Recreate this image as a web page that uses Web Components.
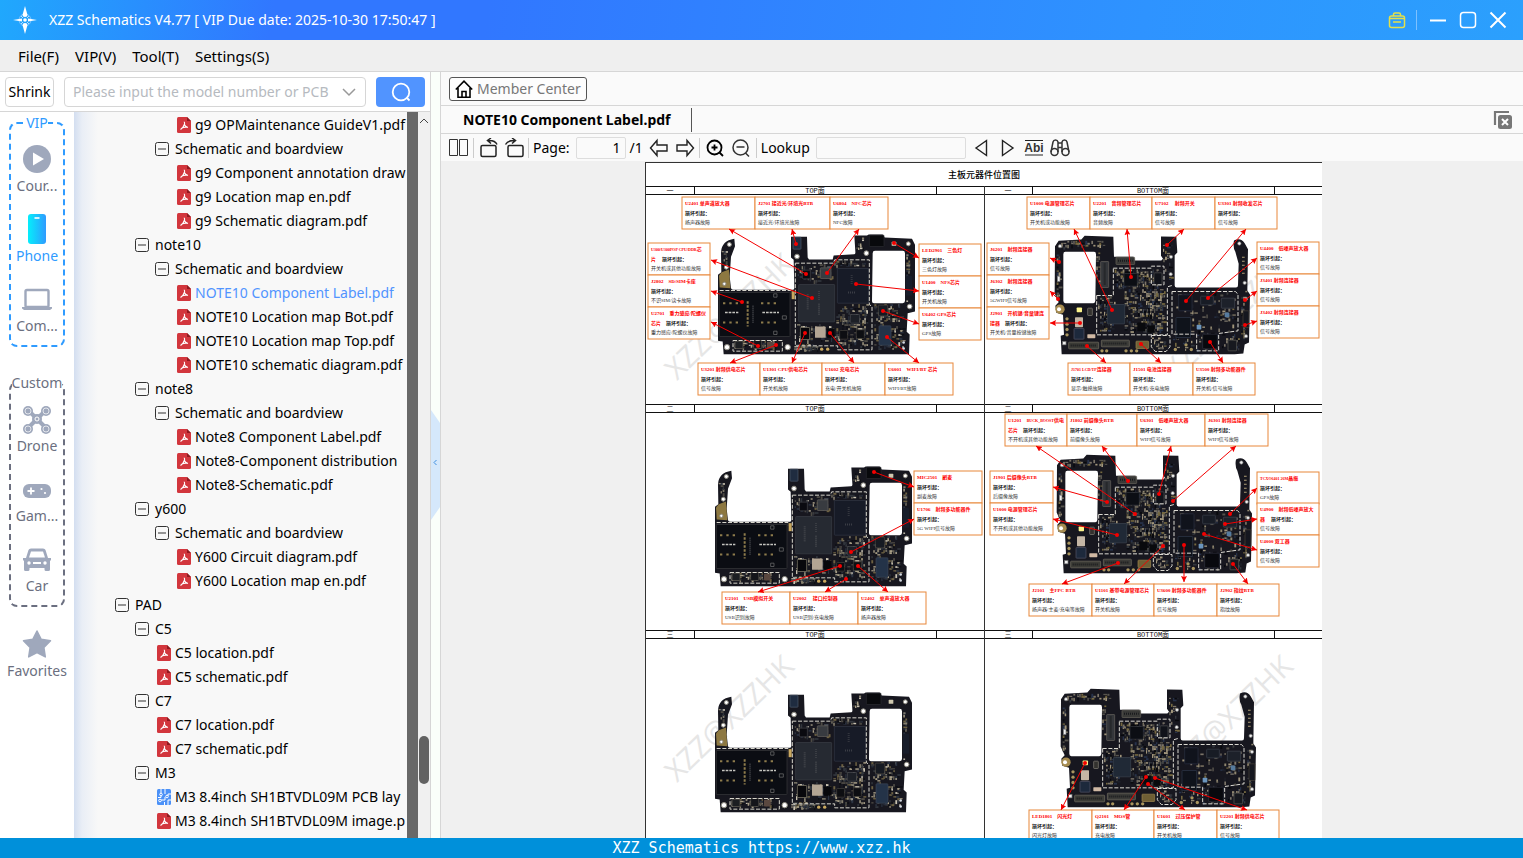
<!DOCTYPE html>
<html lang="en">
<head>
<meta charset="utf-8">
<title>XZZ Schematics</title>
<style>
    :root {
        --line: #d6d6d6;
        --accent: #5194ff;
        --rail: #6b6f80;
        --ui: "Noto Sans", "Open Sans", sans-serif;
    }

    body {
        margin: 0;
        font-family: var(--ui);
        font-size: 14px;
        line-height: 20px;
        color: #000;
    }
</style>
</head>
<body>
<schematic-app></schematic-app>

<script>
const icons = {
    logo: `<svg viewBox="0 0 24 28"><circle cx="12" cy="14" r="6" fill="none" stroke="#7cc4ff" stroke-width="1"/>
        <path d="M12 0l2.500 9q0 2-2.500 2t-2.500-2zM12 28l2.500-9q0-2-2.500-2t-2.500 2zM0 14l9-1.500v3zM24 14l-9-1.500v3z" fill="#fff"/>
        <path d="M8 10l2 2M16 10l-2 2M8 18l2-2M16 18l-2-2" stroke="#b9e0ff"/><circle cx="12" cy="14" r="1.800" fill="#fff"/></svg>`,
    bag: `<svg viewBox="0 0 18 18" fill="none" stroke="#e3e04a" stroke-width="1.500"><rect x="1.500" y="5" width="15" height="11.500" rx="2"/><path d="M5.500 5V3.500q0-1.500 1.500-1.500h4q1.500 0 1.500 1.500V5M1.500 7.500h15M5 11h8"/></svg>`,
    min: `<svg viewBox="0 0 18 18"><path d="M1 9.500h16" stroke="#fff" stroke-width="2"/></svg>`,
    max: `<svg viewBox="0 0 18 18"><rect x="1.500" y="1.500" width="15" height="15" rx="3" fill="none" stroke="#fff" stroke-width="1.500"/></svg>`,
    close: `<svg viewBox="0 0 18 18"><path d="M1.500 1.500l15 15M16.500 1.500l-15 15" stroke="#fff" stroke-width="2"/></svg>`,
    chevron: `<svg viewBox="0 0 14 10"><path d="M1 2l6 6 6-6" fill="none" stroke="#999" stroke-width="1.500"/></svg>`,
    search: `<svg viewBox="0 0 20 20" fill="none" stroke="#fff" stroke-width="1.800"><circle cx="10" cy="10" r="8.300"/><path d="M15.500 15.500l3 3"/></svg>`,
    home: `<svg viewBox="0 0 18 18" fill="none" stroke="#000" stroke-width="1.600"><path d="M.8 9.500L9 1.200l8.200 8.300M3 8v9.200h12V8M7 17v-5.500h4V17"/></svg>`,
    closeAll: `<svg viewBox="0 0 20 20"><path d="M2 15V2h14" fill="none" stroke="#777" stroke-width="2.200"/><rect x="5" y="5" width="14" height="14" rx="2.500" fill="#777"/><path d="M9 9l6 6M15 9l-6 6" stroke="#fff" stroke-width="2"/></svg>`,
    book: `<svg viewBox="0 0 20 20" fill="none" stroke="#333"><path d="M.5 1.500h8v16h-8zM10.500 1.500h8v16h-8z"/></svg>`,
    rotL: `<svg viewBox="0 0 20 20" fill="none" stroke="#222" stroke-width="1.500"><rect x="3" y="7.500" width="15" height="11" rx="1.500"/><path d="M19 6.500Q17 2 10 2.500M13 0L9.500 2.500 13 5.500"/></svg>`,
    rotR: `<svg viewBox="0 0 20 20" fill="none" stroke="#222" stroke-width="1.500"><rect x="4" y="7.500" width="15" height="11" rx="1.500"/><path d="M1.500 6.500Q4 2 11 2.500M8 0L11.500 2.500 8 5.500"/></svg>`,
    left: `<svg viewBox="0 0 20 20" fill="none" stroke="#222" stroke-width="1.400"><path d="M1.500 10L8 2.500V7h10v6H8v4.500z"/></svg>`,
    right: `<svg viewBox="0 0 20 20" fill="none" stroke="#222" stroke-width="1.400"><path d="M18.500 10L12 2.500V7H2v6h10v4.500z"/></svg>`,
    zoomIn: `<svg viewBox="0 0 20 20" fill="none" stroke="#000" stroke-width="1.800"><circle cx="9.500" cy="9.500" r="7"/><path d="M14.500 14.500l3.500 3.500M6.500 9.500h6M9.500 6.500v6"/></svg>`,
    zoomOut: `<svg viewBox="0 0 20 20" fill="none" stroke="#333" stroke-width="1.500"><circle cx="9.500" cy="9.500" r="7.500"/><path d="M14.500 15l3.500 3.500M5.500 9h8"/></svg>`,
    prev: `<svg viewBox="0 0 20 20" fill="none" stroke="#222" stroke-width="1.400"><path d="M14.500 2.500v15L4 10z"/></svg>`,
    next: `<svg viewBox="0 0 20 20" fill="none" stroke="#222" stroke-width="1.400"><path d="M4.500 2.500v15L15 10z"/></svg>`,
    abi: `<svg viewBox="0 0 20 20"><path d="M1 2.500h18M1 17h18" stroke="#222" stroke-width="1.200"/><text x="10" y="14" text-anchor="middle" font-family="Liberation Sans, sans-serif" font-weight="700" font-size="12" fill="#333">Abi</text></svg>`,
    find: `<svg viewBox="0 0 20 20" fill="none" stroke="#333" stroke-width="1.500"><circle cx="4.500" cy="14" r="3.500"/><circle cx="15.500" cy="14" r="3.500"/><path d="M1 14L3 4q.5-2 2.500-2T8 4v10M19 14L17 4q-.5-2-2.500-2T12 4v10M8 5h4M8 9.500h4"/></svg>`,
    pdf: `<svg viewBox="0 0 14 16"><path d="M1.500 0H10l4 4v10.500q0 1.500-1.500 1.500h-11Q0 16 0 14.500v-13Q0 0 1.500 0z" fill="#d2363d"/><path d="M10 0l4 4h-4z" fill="#8f1a20"/><path d="M6.800 5q1.200 0 .6 2.500Q8 9.500 11 10.500M3.500 12.500Q6.500 10.500 7.300 7.500M4.500 11.300Q7 9.800 10.500 10.300" fill="none" stroke="#fff" stroke-width="1.100"/></svg>`,
    pcb: `<svg viewBox="0 0 14 16"><rect width="14" height="16" rx="1.500" fill="#4b91f7"/><path d="M4 0v4M4 7v1.500H1M8 0v5M8 8v3H4M7.500 16v-3M11 16v-5h3M11 7V5h3" fill="none" stroke="#fff"/><g fill="#4b91f7" stroke="#fff"><circle cx="4" cy="5.500" r="1.300"/><circle cx="10" cy="7.500" r="1.300"/><circle cx="3" cy="11.500" r="1.300"/></g></svg>`,
    minus: `<svg viewBox="0 0 14 14" fill="none" stroke="#333"><rect x=".5" y=".5" width="13" height="13" rx="2"/><path d="M3 7h8"/></svg>`,
    play: `<svg viewBox="0 0 30 30"><circle cx="15" cy="15" r="14" fill="#9fa8bc"/><path d="M11 8.500v13l11-6.500z" fill="#fff"/></svg>`,
    phone: `<svg viewBox="0 0 30 30"><defs><linearGradient id="g"><stop offset="0" stop-color="#05eefb"/><stop offset="1" stop-color="#2f9bff"/></linearGradient></defs><rect x="6" width="18" height="30" rx="3" fill="url(#g)"/><path d="M12.500 4h5" stroke="#fff" stroke-width="1.600"/></svg>`,
    laptop: `<svg viewBox="0 0 30 30"><rect x="3.500" y="6" width="23" height="17" rx="1.500" fill="none" stroke="#9fa8bc" stroke-width="2.400"/><path d="M0 23h30v1.500l-2 1.500H2l-2-1.500z" fill="#9fa8bc"/></svg>`,
    drone: `<svg viewBox="0 0 30 30" fill="none" stroke="#9fa8bc"><path d="M6 6l18 18M24 6L6 24" stroke-width="4"/><circle cx="15" cy="15" r="5" fill="#9fa8bc" stroke="none"/><circle cx="15" cy="15" r="2" stroke="#fff"/><g fill="#9fa8bc" stroke="none"><circle cx="6" cy="7" r="5"/><circle cx="24" cy="7" r="5"/><circle cx="6" cy="25" r="5"/><circle cx="24" cy="25" r="5"/></g><g stroke="#fff" stroke-width=".7"><circle cx="6" cy="7" r="3"/><circle cx="24" cy="7" r="3"/><circle cx="6" cy="25" r="3"/><circle cx="24" cy="25" r="3"/></g></svg>`,
    game: `<svg viewBox="0 0 30 30"><rect x="1" y="10" width="28" height="14" rx="6" fill="#9fa8bc"/><path d="M9 13.500v7M5.500 17h7" stroke="#fff" stroke-width="1.800"/><circle cx="19.500" cy="15" r="1.100" fill="#fff"/><circle cx="23" cy="19" r="1.100" fill="#fff"/></svg>`,
    car: `<svg viewBox="0 0 30 30"><path d="M4 14L6.500 6Q7 4.500 9 4.500h12q2 0 2.500 1.500L26 14h3v2l-1 1v8.500q0 1.500-1.500 1.500h-2.500q-1.500 0-1.500-1.500V24h-15v1.500Q7.500 27 6 27H3.500Q2 27 2 25.500V17l-1-1v-2z" fill="#9fa8bc"/><path d="M9 7.500h12l2 6H7z" fill="#fff"/><circle cx="7" cy="19" r="1.700" fill="#fff"/><circle cx="23" cy="19" r="1.700" fill="#fff"/><path d="M11 19h8" stroke="#fff" stroke-width="2"/></svg>`,
    star: `<svg viewBox="0 0 30 30"><path d="M15 2l4.200 8.300 9.300 1.500-6.600 6.700 1.400 9.400-8.300-4.200-8.300 4.200 1.400-9.400-6.600-6.700 9.300-1.500z" fill="#9fa8bc" stroke="#9fa8bc" stroke-width="1.500" stroke-linejoin="round"/></svg>`
};

/* small helper so every element sets its shadow root the same way */
class Base extends HTMLElement {
    constructor() {
        super();
        this.shadow = this.attachShadow({ mode: 'open' });
    }

    connectedCallback() {
        this.render();
    }
}

class UiIcon extends Base {
    render() {
        this.shadow.innerHTML = /*html*/`
        ${icons[this.getAttribute('name')]}
        <style>
            :host { display: block; flex: none; width: 20px; height: 20px; }
            svg { display: block; width: 100%; height: 100%; }
        </style>
        `;
    }
}
customElements.define('ui-icon', UiIcon);

class ToolButton extends Base {
    render() {
        this.shadow.innerHTML = /*html*/`
        <button type="button" aria-label="${this.getAttribute('label')}">
            <ui-icon name="${this.getAttribute('icon')}"></ui-icon>
        </button>
        <style>
            :host { display: block; flex: none; width: 20px; height: 20px; }
            button { display: block; width: 100%; height: 100%; padding: 0; border: none; background: none; }
            ui-icon { width: 100%; height: 100%; }
        </style>
        `;
    }
}
customElements.define('tool-button', ToolButton);

class TitleBar extends Base {
    render() {
        this.shadow.innerHTML = /*html*/`
        <ui-icon class="logo" name="logo"></ui-icon>
        <span class="title"><slot></slot></span>
        <tool-button icon="bag" label="Shop"></tool-button>
        <i></i>
        <tool-button icon="min" label="Minimize"></tool-button>
        <tool-button icon="max" label="Maximize"></tool-button>
        <tool-button icon="close" label="Close"></tool-button>
        <style>
            :host {
                display: flex;
                align-items: center;
                gap: 12px;
                height: 40px;
                padding: 0 16px 0 13px;
                background: linear-gradient(100deg, #20a8fd 0, #3177ff 18%, #3177ff 32%, #2e93ff 75%, #2ba0fd 100%);
                color: #fff;
            }
            .logo { width: 24px; height: 28px; }
            .title { flex: 1; white-space: pre; }
            tool-button { width: 18px; height: 18px; }
            i { width: 1px; height: 20px; background: #7dc1ff; margin-left: -2px; }
        </style>
        `;
    }
}
customElements.define('title-bar', TitleBar);

class MenuBar extends Base {
    render() {
        this.shadow.innerHTML = /*html*/`
        <button>File(F)</button><button>VIP(V)</button><button>Tool(T)</button><button>Settings(S)</button>
        <style>
            :host { display: flex; gap: 16px; height: 31px; padding: 0 18px; background: #efefef; border-bottom: 1px solid var(--line); align-items: center; font-size: 15px; }
            button { padding: 0; border: none; background: none; font: inherit; color: inherit; }
        </style>
        `;
    }
}
customElements.define('menu-bar', MenuBar);

class SearchBar extends Base {
    render() {
        this.shadow.innerHTML = /*html*/`
        <button class="shrink">Shrink</button>
        <label>
            <input type="text" aria-label="Model number" placeholder="Please input the model number or PCB">
            <ui-icon name="chevron"></ui-icon>
        </label>
        <button class="go" aria-label="Search"><ui-icon name="search"></ui-icon></button>
        <style>
            :host { display: flex; align-items: center; gap: 10px; height: 39px; padding: 0 5px; border-bottom: 1px solid var(--line); background: #fff; }
            button, input { font: inherit; color: inherit; }
            .shrink { width: 49px; height: 30px; padding: 0; border: 1px solid var(--line); border-radius: 4px; background: #fff; }
            label { flex: 1; display: flex; align-items: center; height: 28px; padding: 0 9px 0 8px; border: 1px solid var(--line); border-radius: 4px; }
            input { flex: 1; min-width: 0; border: none; outline: none; padding: 0; background: none; }
            input::placeholder { color: #b6bac0; opacity: 1; }
            label ui-icon { width: 14px; height: 10px; }
            .go { display: flex; align-items: center; justify-content: center; width: 49px; height: 30px; padding: 0; border: none; border-radius: 4px; background: var(--accent); }
        </style>
        `;
    }
}
customElements.define('search-bar', SearchBar);

class RailItem extends Base {
    render() {
        this.shadow.innerHTML = /*html*/`
        <button><ui-icon name="${this.getAttribute('icon')}"></ui-icon><slot></slot></button>
        <style>
            :host { display: block; height: 70px; color: var(--rail); }
            :host([active]) { color: #2f9bff; }
            button { display: flex; flex-direction: column; align-items: center; gap: 2px; width: 100%; padding: 0; border: none; background: none; font: inherit; color: inherit; white-space: nowrap; }
            ui-icon { width: 30px; height: 30px; }
        </style>
        `;
    }
}
customElements.define('rail-item', RailItem);

class RailGroup extends Base {
    render() {
        this.shadow.innerHTML = /*html*/`
        <fieldset><legend>${this.getAttribute('label')}</legend><slot></slot></fieldset>
        <style>
            :host { display: block; color: var(--rail); }
            :host([active]) { color: #2f9bff; }
            fieldset { box-sizing: border-box; height: 234px; min-width: 0; margin: 0; padding: 11px 0 0; border: 2px dashed currentColor; border-radius: 8px; }
            legend { margin: 0 auto; padding: 0; }
        </style>
        `;
    }
}
customElements.define('rail-group', RailGroup);

class NavRail extends Base {
    render() {
        this.shadow.innerHTML = /*html*/`
        <rail-group label="VIP" active>
            <rail-item icon="play">Cour...</rail-item>
            <rail-item icon="phone" active>Phone</rail-item>
            <rail-item icon="laptop">Com...</rail-item>
        </rail-group>
        <rail-group label="Custom">
            <rail-item icon="drone">Drone</rail-item>
            <rail-item icon="game">Gam...</rail-item>
            <rail-item icon="car">Car</rail-item>
        </rail-group>
        <rail-item class="fav" icon="star">Favorites</rail-item>
        <style>
            :host { display: flex; flex-direction: column; gap: 26px; flex: none; width: 56px; padding: 1px 9px; background: #fff; }
            .fav { margin: -4px -9px 0; }
        </style>
        `;
    }
}
customElements.define('nav-rail', NavRail);

class TreeItem extends Base {
    render() {
        const type = this.getAttribute('type') || 'folder';
        const level = Number(this.getAttribute('level'));
        const row = type === 'folder'
            ? `<button aria-expanded="true"><ui-icon class="box" name="minus"></ui-icon><slot></slot></button>`
            : `<a href="#"><ui-icon class="file" name="${type}"></ui-icon><slot></slot></a>`;
        this.shadow.innerHTML = /*html*/`
        ${row}
        <style>
            :host { display: block; height: 24px; padding-left: ${41 + level * 20}px; }
            :host([selected]) { color: var(--accent); }
            a, button { display: flex; align-items: center; height: 24px; padding: 0; border: none; background: none; font: inherit; color: inherit; text-decoration: none; white-space: nowrap; }
            .box { width: 14px; height: 14px; margin-right: 6px; }
            .file { width: 14px; height: 16px; margin: 0 4px 0 2px; }
        </style>
        `;
    }
}
customElements.define('tree-item', TreeItem);

const tree = [
    [3, 'g9 OPMaintenance GuideV1.pdf', 'pdf'],
    [2, 'Schematic and boardview'],
    [3, 'g9 Component annotation draw', 'pdf'],
    [3, 'g9 Location map en.pdf', 'pdf'],
    [3, 'g9 Schematic diagram.pdf', 'pdf'],
    [1, 'note10'],
    [2, 'Schematic and boardview'],
    [3, 'NOTE10 Component Label.pdf', 'pdf', true],
    [3, 'NOTE10 Location map Bot.pdf', 'pdf'],
    [3, 'NOTE10 Location map Top.pdf', 'pdf'],
    [3, 'NOTE10 schematic diagram.pdf', 'pdf'],
    [1, 'note8'],
    [2, 'Schematic and boardview'],
    [3, 'Note8 Component Label.pdf', 'pdf'],
    [3, 'Note8-Component distribution', 'pdf'],
    [3, 'Note8-Schematic.pdf', 'pdf'],
    [1, 'y600'],
    [2, 'Schematic and boardview'],
    [3, 'Y600 Circuit diagram.pdf', 'pdf'],
    [3, 'Y600 Location map en.pdf', 'pdf'],
    [0, 'PAD'],
    [1, 'C5'],
    [2, 'C5 location.pdf', 'pdf'],
    [2, 'C5 schematic.pdf', 'pdf'],
    [1, 'C7'],
    [2, 'C7 location.pdf', 'pdf'],
    [2, 'C7 schematic.pdf', 'pdf'],
    [1, 'M3'],
    [2, 'M3 8.4inch SH1BTVDL09M PCB lay', 'pcb'],
    [2, 'M3 8.4inch SH1BTVDL09M image.p', 'pdf']
];

class FileTree extends Base {
    render() {
        this.shadow.innerHTML = /*html*/`
        <div class="list">
            ${tree.map(([level, text, type, sel]) => `<tree-item level="${level}" type="${type || 'folder'}" ${sel ? 'selected' : ''}>${text}</tree-item>`).join('')}
        </div>
        <div class="bar"></div>
        <div class="scroll">
            <svg viewBox="0 0 10 8" width="10" height="8"><path d="M1 6l4-4 4 4" fill="none" stroke="#444"/></svg>
            <div class="thumb"></div>
        </div>
        <style>
            :host { display: flex; flex: 1; min-width: 0; background: #f8f8f8; }
            .list { flex: 1; min-width: 0; overflow: hidden; padding-top: 1px; background: linear-gradient(90deg, #d3def0 0, #e9eef6 8px, #f8f8f8 24px); }
            .bar { width: 11px; background: #686868; }
            .scroll { display: grid; grid-template-rows: 17px 607fr 48px 54fr; justify-items: center; align-items: center; width: 12px; background: #f0f0f0; }
            .thumb { grid-row: 3; width: 10px; height: 48px; border-radius: 5px; background: #626262; }
        </style>
        `;
    }
}
customElements.define('file-tree', FileTree);

class SplitHandle extends Base {
    render() {
        this.shadow.innerHTML = /*html*/`
        <svg viewBox="0 0 9 110" width="9" height="110">
            <path d="M0 0l9 13v84L0 110z" fill="#d5e8fb"/>
            <path d="M5.500 50L3 52.500 5.500 55" fill="none" stroke="#3f8fe0"/>
        </svg>
        <style>
            :host { display: flex; align-items: center; flex: none; width: 9px; padding-bottom: 18px; border: solid var(--line); border-width: 0 1px; background: #fafffa; }
            svg { margin-top: 38px; }
        </style>
        `;
    }
}
customElements.define('split-handle', SplitHandle);

class ViewerTools extends Base {
    render() {
        this.shadow.innerHTML = /*html*/`
        <div class="member"><button><ui-icon name="home"></ui-icon>Member Center</button></div>
        <div class="tabs">
            <button>NOTE10 Component Label.pdf</button>
            <tool-button icon="closeAll" label="Close all tabs"></tool-button>
        </div>
        <div class="tools">
            <div class="group"><tool-button icon="book" label="Two pages"></tool-button></div>
            <div class="group">
                <tool-button icon="rotL" label="Rotate left"></tool-button>
                <tool-button icon="rotR" label="Rotate right"></tool-button>
            </div>
            <div class="group">
                <label for="page">Page:</label>
                <div class="pages"><input id="page" type="text" value="1"><span>/1</span></div>
                <tool-button icon="left" label="Previous page"></tool-button>
                <tool-button icon="right" label="Next page"></tool-button>
            </div>
            <div class="group wide">
                <tool-button icon="zoomIn" label="Zoom in"></tool-button>
                <tool-button icon="zoomOut" label="Zoom out"></tool-button>
            </div>
            <div class="group">
                <label for="lookup">Lookup</label>
                <input id="lookup" type="text">
                <tool-button icon="prev" label="Find previous"></tool-button>
                <tool-button icon="next" label="Find next"></tool-button>
                <tool-button icon="abi" label="Match case"></tool-button>
                <tool-button icon="find" label="Find"></tool-button>
            </div>
        </div>
        <style>
            :host { display: block; flex: none; background: #fafafa; }
            button, input { font: inherit; color: inherit; }
            .member, .tabs { display: flex; align-items: center; border-bottom: 1px solid var(--line); }
            .member { height: 33px; padding: 0 8px; }
            .member button { display: flex; align-items: center; gap: 4px; height: 24px; padding: 0 5px; border: 1px solid #555; border-radius: 3px; background: #fdfdfd; color: #777; }
            .member ui-icon { width: 18px; height: 18px; }
            .tabs { justify-content: space-between; height: 27px; padding-right: 10px; }
            .tabs button { height: 24px; padding: 0 20px 0 22px; border: none; border-right: 1px solid #555; background: none; font-weight: 700; }
            .tools { display: flex; align-items: center; height: 27px; padding-left: 4px; }
            .group { display: flex; align-items: center; gap: 6px; height: 20px; padding: 0 4px; }
            .group.wide { padding: 0 5px; }
            .group + .group { border-left: 1px solid #ccc; }
            .pages { display: flex; align-items: center; gap: 4px; }
            input { box-sizing: border-box; height: 22px; padding: 0 4px; border: 1px solid #ddd; border-radius: 2px; background: #fafafa; outline: none; }
            #page { width: 50px; text-align: right; }
            #lookup { width: 150px; }
        </style>
        `;
    }
}
customElements.define('viewer-tools', ViewerTools);

/* callouts: [x, y, w, title, fault, rest of a title that wraps]
   arrows: [from x, from y, to x, to y] */
const panels = [
    {
        x: 0, y: 24, no: '一', side: 'TOP面', board: [71, 48], mark: [32, 195],
        callouts: [
            [37, 11, 73, 'U2401 单声道放大器', '扬声器故障'],
            [110, 11, 75, 'J2701 接近光/环境光BTB', '接近光/环境光故障'],
            [185, 11, 58, 'U6804　NFC芯片', 'NFC故障'],
            [3, 57, 62, 'U300/U300POP CPU/DDR芯', '开关机或其他功能故障', '片'],
            [3, 89, 62, 'J2802　SD/SIM卡座', '不识SIM/读卡故障'],
            [3, 121, 62, 'U2701　重力感应/陀螺仪', '重力感应/陀螺仪故障', '芯片'],
            [274, 58, 62, 'LED2901　三色灯', '三色灯故障'],
            [274, 90, 62, 'U1400　NFS芯片', '开关机故障'],
            [274, 122, 62, 'U6402 GPS芯片', 'GPS故障'],
            [53, 177, 62, 'U3201 射频供电芯片', '信号故障'],
            [115, 177, 62, 'U1301 CPU供电芯片', '开关机故障'],
            [177, 177, 63, 'U1602 充电芯片', '充电/开关机故障'],
            [240, 177, 68, 'U6001　WIFI/BT 芯片', 'WIFI/BT故障']
        ],
        arrows: [
            [161, 88, 84, 43], [151, 58, 147, 43], [182, 87, 214, 43], [167, 112, 66, 74], [97, 116, 66, 105],
            [113, 160, 66, 136], [249, 57, 274, 72], [211, 98, 274, 105], [238, 125, 274, 138], [131, 159, 85, 177],
            [160, 147, 147, 177], [185, 147, 209, 177], [242, 151, 274, 177]
        ]
    },
    {
        x: 338, y: 24, no: '一', side: 'BOTTOM面', board: [70, 48, true], mark: [193, 195],
        callouts: [
            [44, 11, 63, 'U1000 电源管理芯片', '开关机或功能故障'],
            [107, 11, 62, 'U2201　音频管理芯片', '音频故障'],
            [169, 11, 63, 'U7102　 射频开关', '信号故障'],
            [232, 11, 62, 'U3301 射频收发芯片', '信号故障'],
            [4, 57, 62, 'J6201　射频连接器', '信号故障'],
            [4, 89, 62, 'J6302　射频连接器', '5GWIFI信号故障'],
            [4, 121, 62, 'J2901　开机键/音量键连', '开关机/音量按键故障', '接器'],
            [274, 56, 62, 'U4400　低噪声放大器', '信号故障'],
            [274, 88, 62, 'J3401 射频连接器', '信号故障'],
            [274, 120, 62, 'J3402 射频连接器', '信号故障'],
            [85, 177, 62, 'J1701 LCD/TP连接器', '显示/触摸故障'],
            [147, 177, 63, 'J1501 电池连接器', '开关机/充电故障'],
            [210, 177, 62, 'U3500 射频多功能器件', '开关机/信号故障']
        ],
        arrows: [
            [129, 124, 91, 43], [148, 91, 144, 43], [184, 59, 201, 43], [203, 115, 263, 43], [76, 76, 67, 72],
            [75, 113, 67, 105], [97, 137, 67, 137], [225, 112, 274, 72], [262, 114, 274, 105], [262, 139, 274, 135],
            [104, 160, 123, 177], [158, 158, 178, 177], [227, 156, 240, 177]
        ]
    },
    {
        x: 0, y: 242, no: '二', side: 'TOP面', board: [68, 62],
        callouts: [
            [269, 67, 68, 'MIC2501　副麦', '副麦故障'],
            [269, 99, 68, 'U1706　射频多功能器件', '5G WIFI信号故障'],
            [77, 188, 68, 'U2101　USB模拟开关', 'USB识别故障'],
            [145, 188, 68, 'U2002　 接口控制器', 'USB识别/充电故障'],
            [213, 188, 68, 'U2402　单声道放大器', '扬声器故障']
        ],
        arrows: [[229, 68, 269, 83], [206, 148, 269, 115], [195, 162, 113, 188], [201, 175, 180, 188], [213, 162, 243, 188]]
    },
    {
        x: 338, y: 242, no: '二', side: 'BOTTOM面', board: [72, 49, true],
        callouts: [
            [22, 10, 62, 'U1201　BUCK_BOOST供电', '不开机或其他功能故障', '芯片'],
            [84, 10, 70, 'J1802 前摄像头BTB', '前摄像头故障'],
            [154, 10, 68, 'U6301　低噪声放大器', 'WIFI信号故障'],
            [222, 10, 63, 'J6301 射频连接器', 'WIFI信号故障'],
            [7, 67, 63, 'J1901 后摄像头BTB', '后摄像故障'],
            [7, 99, 63, 'U1000 电源管理芯片', '不开机或其他功能故障'],
            [274, 68, 62, 'TCXO6401 26M晶振', 'GPS故障'],
            [274, 99, 62, 'U4900　射频低噪声放大', '信号故障', '器'],
            [274, 131, 62, 'U4000 双工器', '信号故障'],
            [46, 180, 63, 'J2101　主FPC BTB', '扬声器/主麦/充电等故障'],
            [109, 180, 62, 'U1101 基带电源管理芯片', '开关机故障'],
            [171, 180, 63, 'U3600 射频多功能器件', '信号故障'],
            [234, 180, 62, 'J2902 指纹BTB', '指纹故障']
        ],
        arrows: [
            [152, 110, 53, 42], [145, 77, 119, 42], [176, 90, 188, 42], [190, 97, 253, 42], [124, 98, 70, 83],
            [134, 131, 70, 115], [247, 110, 274, 84], [242, 120, 274, 115], [221, 130, 274, 146], [135, 159, 79, 180],
            [180, 142, 141, 180], [201, 141, 201, 178], [250, 160, 265, 180]
        ]
    },
    { x: 0, y: 468, no: '三', side: 'TOP面', board: [68, 62], mark: [32, 153], callouts: [], arrows: [] },
    {
        x: 338, y: 468, no: '三', side: 'BOTTOM面', board: [76, 57, true], mark: [193, 153],
        callouts: [
            [46, 180, 63, 'LED1801　闪光灯', '闪光灯故障'],
            [109, 180, 62, 'Q2101　MOS管', '充电故障'],
            [171, 180, 63, 'U1601　过压保护管', '开关机故障'],
            [234, 180, 62, 'U2201 射频供电芯片', '信号故障']
        ],
        arrows: [[102, 133, 78, 180], [163, 147, 141, 180], [165, 154, 202, 180], [172, 148, 264, 180]]
    }
];

class BoardDocument extends Base {
    /* same sequence on every load, so the boards do not change */
    scatter(seed, areas, palette) {
        let s = seed;
        const rnd = () => (s = (s * 16807) % 2147483647) / 2147483647;
        return areas.map(([x, y, w, h, n]) => {
            let out = '';
            for (let i = 0; i < n; i++) {
                const flip = rnd() > .5;
                const a = 3 + rnd() * 3, b = 5 + rnd() * 7;
                const px = x + Math.round(rnd() * (w - 10) / 6) * 6, py = y + Math.round(rnd() * (h - 8) / 6) * 6;
                out += `<rect x="${px}" y="${py}" width="${(flip ? a : b).toFixed(1)}" height="${(flip ? b : a).toFixed(1)}" fill="${palette[Math.floor(rnd() * palette.length)]}"/>`;
            }
            return out;
        }).join('');
    }

    rects(list) {
        return list.map(([x, y, w, h, fill, stroke]) => `<rect x="${x}" y="${y}" width="${w}" height="${h}" rx="2" fill="${fill}" ${stroke ? `stroke="${stroke}" stroke-width="2"` : ''}/>`).join('');
    }

    topBoard() {
        return `<symbol id="top" viewBox="205 195 600 365">
            <path fill="#17171f" fill-rule="evenodd" d="M211 317l10-8-1-60q2-34 40-40l2 22-12 32-4 60 4 34q2 5 8 5h178q4 0 4-6l-2-84-8-7v-62h48l2 62 4 6h71l3-12 62-4q4 0 3-8l-3-48h38l5-3h42l6 9 82 4 9 18v200l-22 5-3 56 9 8-2 59H228l-3-38-14-2zM682 245q-7 0-7 7l-2 144q0 6 6 6h86q7 0 7-7V252q0-7-7-7z"/>
            <path fill="#8d7841" d="M222 309l22-8 4 56-32-2-2-36z"/>
            <g fill="#fff" stroke="#8d8a80" stroke-width="3"><circle cx="245" cy="226" r="6"/><circle cx="236" cy="294" r="6"/><circle cx="230" cy="344" r="5"/><circle cx="448" cy="262" r="7"/><circle cx="656" cy="252" r="7"/><circle cx="786" cy="412" r="7"/><circle cx="782" cy="224" r="6"/><circle cx="238" cy="534" r="8"/><circle cx="420" cy="534" r="8"/></g>
            ${this.scatter(71, [[450, 285, 112, 55, 50], [566, 405, 100, 135, 170], [448, 465, 120, 55, 60], [680, 405, 90, 60, 60], [680, 465, 95, 78, 80], [255, 515, 150, 28, 50], [440, 525, 80, 24, 70], [560, 275, 105, 20, 24], [625, 205, 30, 38, 14], [222, 240, 24, 50, 8], [776, 250, 14, 150, 24]], ['#4d4a44', '#87806f', '#32363d', '#a89e86', '#6d6142', '#0d0e13', '#2b3342', '#c9c2b0'])}
            ${this.rects([
                [215, 370, 212, 132, '#0b0d13', '#3a3b3d'], [453, 346, 108, 112, '#262a32', '#3b3f47'], [569, 298, 94, 104, '#171b27', '#333846'],
                [464, 303, 24, 26, '#0a0a10', '#45464a'], [518, 296, 32, 32, '#383b40', '#66645e'], [458, 475, 28, 36, '#08080c', '#8d8672'],
                [502, 472, 32, 34, '#b3a594'], [537, 478, 24, 28, '#07070b'], [694, 470, 36, 58, '#243348', '#3c4758'], [436, 204, 24, 36, '#1f2c40', '#505a69'],
                [665, 198, 44, 34, '#08090c', '#2b2c30'], [608, 436, 28, 26, '#1d2027', '#4a4c52'], [576, 484, 24, 26, '#0d0e12', '#47443e'],
                [626, 482, 24, 26, '#0d0e12', '#47443e'], [692, 408, 28, 32, '#161a22', '#4b4741'], [732, 218, 14, 12, '#cfc9b0'], [775, 320, 18, 60, '#181d2a'],
                [262, 516, 24, 22, '#1c1e22', '#6a655a'], [318, 514, 24, 24, '#14151a', '#5b574e'], [358, 518, 20, 20, '#5a4840']
            ])}
            <path d="M216 364h214v8M443 282h114l4-10h104v134l8 6v130H570v-12H443zM256 514h148v32H256z" fill="none" stroke="#d8d6cc" stroke-width="3" stroke-dasharray="12 5"/>
            <g fill="none" stroke="#8e7c4c" stroke-width="6" stroke-dasharray="7 12"><path d="M226 402h54M340 402h56M226 460h54M340 460h56"/><path d="M300 396v76" stroke-dasharray="8 4"/></g>
            <path d="M232 430h40M344 430h50" stroke="#c4c4be" stroke-width="4" stroke-dasharray="8 3"/>
            <path d="M378 374h10v10h-10zM378 486h10v10h-10zM404 440h12v10h-12z" fill="none" stroke="#777" stroke-width="2"/>
            <path d="M316 410v50M480 376v44M514 366v30M514 404v36M612 318v28M602 370h24" stroke="#4e5055" stroke-width="6" stroke-dasharray="2 4"/>
            <g fill="#c9a85f"><circle cx="522" cy="540" r="5"/><circle cx="540" cy="540" r="5"/><circle cx="768" cy="520" r="4" fill="#d5dbe4"/><circle cx="768" cy="538" r="4" fill="#d5dbe4"/><rect x="432" y="366" width="9" height="24"/></g>
        </symbol>`;
    }

    bottomBoard() {
        return `<symbol id="bottom" viewBox="215 160 600 365">
            <path fill="#17171f" fill-rule="evenodd" d="M221 196l11-16 68-4 10-11 86 3 2 60h58l4 11h80l5-5-6-9v-58l46 1 3 47-8 8v90q0 7 6 7h178q6 0 6-7l2-64-10-36q-8-14-4-34 20-10 32 8l10 18-2 124 8 12-3 144-13 6-4 27-26 2H241l-3-55 10-3-3-60-20-6-3-21 10-11-12-26zM252 213q-6 0-6 7v140q0 7 6 7h84q6 0 6-7l2-140q0-7-6-7z"/>
            <circle cx="236" cy="385" r="14" fill="#a68c50"/><circle cx="233" cy="385" r="6" fill="#fff"/>
            ${this.scatter(97, [[400, 266, 150, 60, 130], [470, 325, 86, 90, 170], [350, 345, 60, 110, 80], [430, 325, 44, 135, 80], [480, 415, 76, 45, 60], [585, 335, 190, 120, 90], [575, 450, 140, 60, 50], [226, 215, 16, 140, 26], [345, 215, 16, 140, 12], [240, 180, 140, 24, 34], [545, 180, 34, 130, 24], [722, 460, 60, 50, 30], [512, 470, 50, 38, 20], [780, 330, 20, 150, 30]], ['#57544d', '#7b7468', '#32363d', '#a1957b', '#75683f', '#08090d', '#27324a', '#8f866f', '#1d2029'])}
            ${this.rects([
                [428, 278, 40, 38, '#0c0e14', '#33363e'], [378, 371, 52, 58, '#202936', '#3d4550'], [358, 242, 24, 78, '#34363a', '#66645d'],
                [404, 229, 56, 22, '#393937', '#67635a'], [262, 484, 90, 20, '#3b3b36', '#757163'], [360, 478, 84, 20, '#3b3b38', '#757163'],
                [464, 481, 38, 22, '#6f5f35', '#a08850'], [278, 443, 30, 32, '#1d293c', '#556'], [281, 409, 24, 30, '#c4b6a5'], [286, 380, 16, 14, '#fbf38b'],
                [319, 382, 14, 22, '#33322f', '#88847a'], [318, 460, 24, 12, '#d0b9a4'], [592, 342, 40, 48, '#10131c', '#2a3144'],
                [658, 346, 38, 26, '#181c25', '#3d434f'], [720, 352, 40, 30, '#1d212a', '#454a54'], [584, 410, 44, 60, '#0f131b', '#2f3a4b'],
                [664, 460, 44, 44, '#08090e', '#303441'], [646, 432, 14, 14, '#6b95bd'], [730, 395, 14, 14, '#567b9e'], [740, 478, 26, 32, '#17191f', '#5e5d58'],
                [785, 390, 18, 50, '#15171f', '#494239'], [468, 425, 24, 26, '#090a0d'], [498, 434, 22, 22, '#090a0d'], [518, 276, 24, 36, '#101219', '#555']
            ])}
            <path d="M396 262h114v-6h38v56h-38v-40M346 344h50v-82M346 344v118h212V318l14-4M572 332h190l8 8v110l-58 8v52h-66v-50h-74zM510 464h56v34l-12 14h-32l-12-14z" fill="none" stroke="#dcdad2" stroke-width="3" stroke-dasharray="12 5"/>
            <path d="M370 248v66M410 240h44M268 494h78M366 488h72" fill="none" stroke="#191a1d" stroke-width="6" stroke-dasharray="3 3"/>
            <g fill="#a9955f"><circle cx="257" cy="414" r="5"/><circle cx="257" cy="430" r="5"/><circle cx="257" cy="446" r="5"/><circle cx="257" cy="462" r="5"/><circle cx="362" cy="510" r="5"/><circle cx="376" cy="510" r="5"/><circle cx="434" cy="510" r="5"/><circle cx="450" cy="510" r="5"/><circle cx="466" cy="510" r="5"/><circle cx="582" cy="506" r="5"/><circle cx="614" cy="492" r="5"/><circle cx="630" cy="506" r="5"/></g>
            <g fill="#eee" stroke="#777" stroke-width="2"><circle cx="236" cy="196" r="5"/><circle cx="774" cy="188" r="5"/><circle cx="569" cy="228" r="5"/><circle cx="568" cy="280" r="5"/><circle cx="790" cy="306" r="5"/><circle cx="794" cy="354" r="5"/><circle cx="794" cy="466" r="5"/><rect x="228" y="286" width="8" height="16"/><rect x="244" y="482" width="10" height="10"/></g>
            <path d="M786 228v60" stroke="#b0a078" stroke-width="8" stroke-dasharray="3 9"/>
        </symbol>`;
    }

    /* long part names are set smaller, to stay inside the box */
    title(text) {
        return text.replace(/[\x20-\x7e]{10,}/g, run => `<tspan class="long">${run}</tspan>`);
    }

    callout([x, y, w, title, fault, rest]) {
        return `<rect x="${x}" y="${y}" width="${w}" height="32" fill="#fff" stroke="#e8873a"/>
            <text class="red" x="${x + 3}" y="${y + 8}">${this.title(title)}</text>
            ${rest ? `<text class="red" x="${x + 3}" y="${y + 18}">${rest}</text>` : ''}
            <text class="bold" x="${rest ? x + 10 + rest.length * 4 : x + 3}" y="${y + 18}">损坏引起：</text>
            <text x="${x + 3}" y="${y + 27}">${fault}</text>`;
    }

    panel(p) {
        const [bx, by, bottom] = p.board;
        return `<g transform="translate(${p.x} ${p.y})">
            ${p.mark ? `<text class="mark" transform="translate(${p.mark[0]} ${p.mark[1]}) rotate(-44)">XZZ@XZZHK</text>` : ''}
            <use href="#${bottom ? 'bottom' : 'top'}" x="${bx}" y="${by}" width="200" height="122"/>
            <path d="M0 .5h339M0 8.500h339M49.500 0v8M291.500 0v8" stroke="#111" fill="none"/>
            <text class="side" x="25" y="7">${p.no}</text>
            <text class="side" x="170" y="7">${p.side}</text>
            ${p.callouts.map(c => this.callout(c)).join('')}
            ${p.arrows.map(([a, b, c, d]) => `<circle cx="${a}" cy="${b}" r="2" fill="#f40000"/><path d="M${a} ${b}L${c} ${d}" stroke="#f40000" marker-end="url(#tip)"/>`).join('')}
        </g>`;
    }

    render() {
        this.shadow.innerHTML = /*html*/`
        <svg viewBox="0 0 677 720" width="677" height="720">
            <defs>
                <marker id="tip" viewBox="0 0 6 6" refX="6" refY="3" markerWidth="6" markerHeight="6" orient="auto"><path d="M0 0l6 3-6 3 1-3z" fill="#f40000"/></marker>
                ${this.topBoard()}
                ${this.bottomBoard()}
            </defs>
            <rect width="677" height="720" fill="#fff"/>
            <text class="head" x="339" y="16">主板元器件位置图</text>
            ${panels.map(p => this.panel(p)).join('')}
            <path d="M0 .5h677M.5 0v720M339.500 24v696" stroke="#333" fill="none"/>
        </svg>
        <style>
            :host { display: block; }
            svg { display: block; }
            text { font: 5px "Liberation Serif", "Noto Sans CJK SC", sans-serif; fill: #333; white-space: pre; }
            .long { font-size: 4px; }
            .red { font-weight: 700; fill: #f00; }
            .bold { font-weight: 700; fill: #111; }
            .head { font-size: 9px; font-weight: 500; fill: #000; text-anchor: middle; }
            .side { font: 7px "Liberation Mono", "Noto Sans CJK SC", monospace; fill: #111; text-anchor: middle; }
            .mark { font: 29px "Open Sans", sans-serif; fill: #e6e6e6; }
        </style>
        `;
    }
}
customElements.define('board-document', BoardDocument);

class SchematicApp extends Base {
    render() {
        this.shadow.innerHTML = /*html*/`
        <title-bar>XZZ Schematics V4.77 [ VIP Due date: 2025-10-30 17:50:47 ]</title-bar>
        <menu-bar></menu-bar>
        <main>
            <aside>
                <search-bar></search-bar>
                <div class="browse"><nav-rail></nav-rail><file-tree></file-tree></div>
            </aside>
            <split-handle></split-handle>
            <section>
                <viewer-tools></viewer-tools>
                <div class="canvas"><board-document></board-document></div>
            </section>
        </main>
        <footer>XZZ Schematics https://www.xzz.hk</footer>
        <style>
            :host { display: flex; flex-direction: column; height: 100vh; overflow: hidden; }
            main { display: flex; flex: 1; min-height: 0; }
            aside { display: flex; flex-direction: column; flex: none; width: 430px; }
            .browse { display: flex; flex: 1; min-height: 0; overflow: hidden; }
            section { display: flex; flex-direction: column; flex: 1; min-width: 0; }
            .canvas { display: flex; justify-content: center; flex: 1; min-height: 0; padding: 1px 0 0 2px; overflow: hidden; background: #f0f0f0; }
            footer { flex: none; height: 20px; background: #0090da; color: #fff; text-align: center; font: 15px/20px "DejaVu Sans Mono", "Liberation Mono", monospace; }
        </style>
        `;
    }
}
customElements.define('schematic-app', SchematicApp);
</script>
</body>
</html>
